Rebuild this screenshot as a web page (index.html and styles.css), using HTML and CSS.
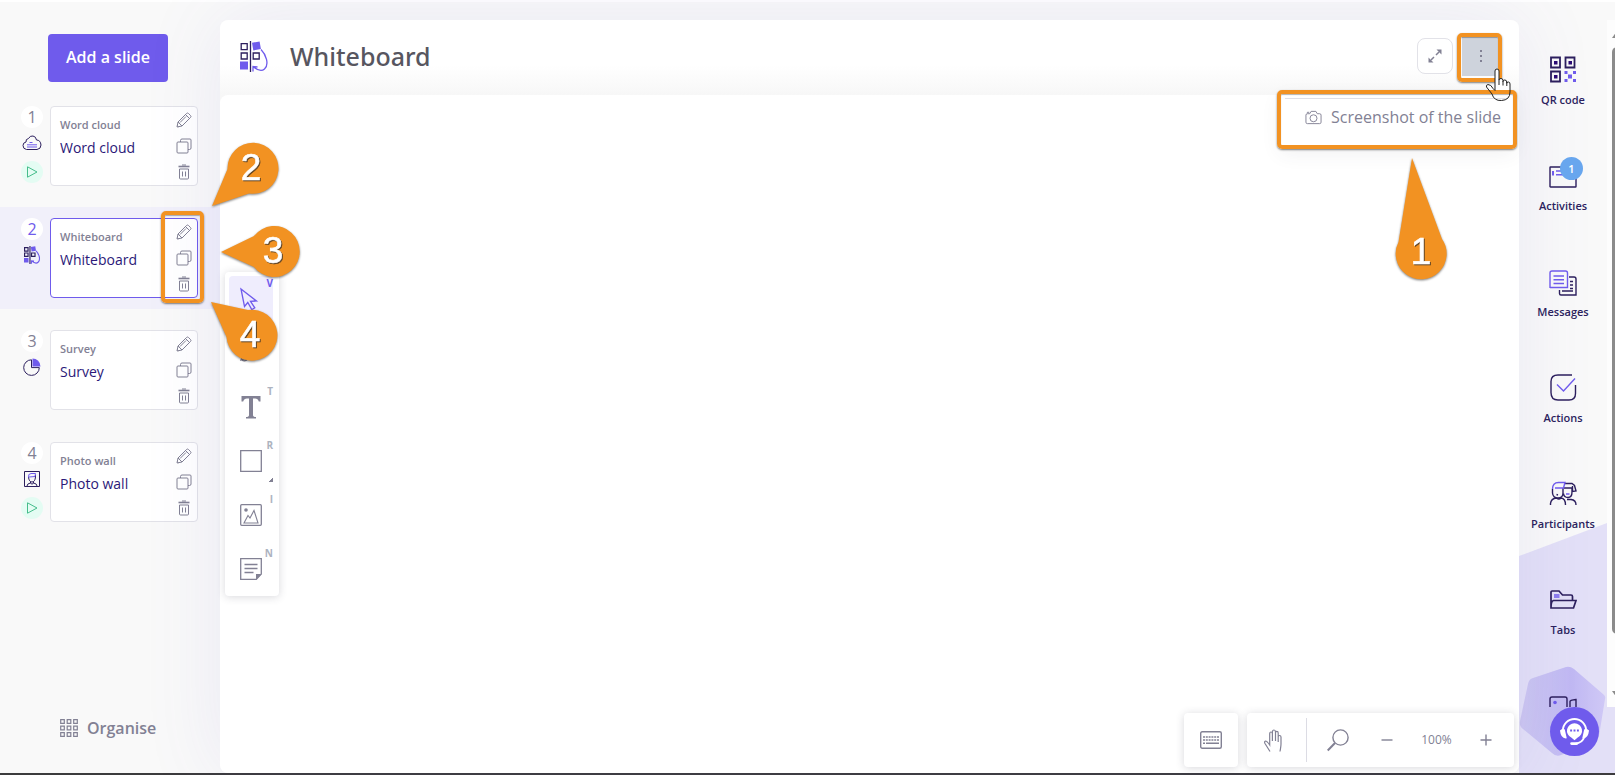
FILE: index.html
```html
<!DOCTYPE html>
<html lang="en">
<head>
<meta charset="utf-8">
<title>Whiteboard</title>
<link rel="stylesheet" href="styles.css">
</head>
<body>
<svg class="defs" aria-hidden="true">
  <symbol id="pencil" viewBox="0 0 16 16"><path d="M1 15l1-5 8.500-8.500q1-1 2 0l2 2q1 1 0 2L6 14z M2 10l4 4 M9.500 2.500l4 4 M4 10.500l6-6 M1.200 13.500l1.300 1.300" /></symbol>
  <symbol id="copy" viewBox="0 0 16 16"><rect x="1" y="4" width="11" height="11" rx="1"/><path d="M4.500 4V2.500q0-1.500 1.500-1.500H14q1 0 1 1v8q0 1.500-1.500 1.500H12"/></symbol>
  <symbol id="trash" viewBox="0 0 16 16"><path d="M2.500 2.500h11" stroke-width="1.600"/><path d="M6 1h4M3.500 5v9q0 1 1 1h7q1 0 1-1V5zM6.500 7.500v5M9.500 7.500v5"/></symbol>
  <symbol id="play" viewBox="0 0 12 12"><path d="M1.500.8v10.400L11 6z"/></symbol>
  <symbol id="board" viewBox="0 0 28 31"><path class="ink" d="M1.200 2.700h6v6h-6zM1.200 12h6v6h-6zM13.200 12h6v6h-6zM10.500 0v31"/><path class="fill" d="M0 20.500h8v8H0zM12 1.800l7.600-1.300 1.300 7.600-7.600 1.300z"/><path class="accent" d="M21 8.500c5 5 8.500 15 3.500 19.500q-4 3.500-11-2M13 30.500v-5l4.500.500"/></symbol>
</svg>

<div class="app">
  <aside class="sidebar">
    <button class="add" type="button">Add a slide</button>
    <ol class="slides">
      <li class="slide">
        <div class="meta"><span class="num">1</span>
          <svg class="kind" viewBox="0 0 20 18"><path class="ink" d="M4.500 15.500Q1 15 1 11.500 1 8.500 4 8q-.5-3 2.500-3.500Q8 1.500 11 2q3 .5 3.500 4 4 0 4.500 5 0 4-4 4.500z"/><path class="accent" d="M7.500 8.500h3M5 10.800h10M5 13h10"/></svg>
          <span class="live"><svg viewBox="0 0 12 12"><use href="#play"/></svg></span></div>
        <div class="card"><div class="names"><span class="type">Word cloud</span><a href="#s1">Word cloud</a></div>
          <div class="acts"><button type="button" aria-label="Edit"><svg><use href="#pencil"/></svg></button><button type="button" aria-label="Duplicate"><svg><use href="#copy"/></svg></button><button type="button" aria-label="Delete"><svg><use href="#trash"/></svg></button></div></div>
      </li>
      <li class="slide current">
        <div class="meta"><span class="num">2</span>
          <svg class="kind thick" viewBox="0 0 28 31"><use href="#board"/></svg></div>
        <div class="card"><div class="names"><span class="type">Whiteboard</span><a href="#s2">Whiteboard</a></div>
          <div class="acts"><button type="button" aria-label="Edit"><svg><use href="#pencil"/></svg></button><button type="button" aria-label="Duplicate"><svg><use href="#copy"/></svg></button><button type="button" aria-label="Delete"><svg><use href="#trash"/></svg></button></div></div>
      </li>
      <li class="slide">
        <div class="meta"><span class="num">3</span>
          <svg class="kind" viewBox="0 0 18 18"><path class="ink" d="M8.500 1.800a7.800 7.800 0 1 0 7.800 7.800H8.500z"/><path class="fill" d="M9.500.5a8 8 0 0 1 8 8h-8z"/></svg></div>
        <div class="card"><div class="names"><span class="type">Survey</span><a href="#s3">Survey</a></div>
          <div class="acts"><button type="button" aria-label="Edit"><svg><use href="#pencil"/></svg></button><button type="button" aria-label="Duplicate"><svg><use href="#copy"/></svg></button><button type="button" aria-label="Delete"><svg><use href="#trash"/></svg></button></div></div>
      </li>
      <li class="slide">
        <div class="meta"><span class="num">4</span>
          <svg class="kind" viewBox="0 0 18 18"><path class="ink" d="M1.500 1.500h15v15h-15zM4 16q0-2.500 3.500-3v-1.500M14 16q0-2.500-3.500-3v-1.500M5.500 7q.5 5 3.500 5t3.500-5V5M7.500 13.500q1.500 1 3 0"/><path class="accent" d="M5.500 7.500Q5 3.500 8 3.500h4.500l-.5 3-6 .5"/></svg>
          <span class="live"><svg viewBox="0 0 12 12"><use href="#play"/></svg></span></div>
        <div class="card"><div class="names"><span class="type">Photo wall</span><a href="#s4">Photo wall</a></div>
          <div class="acts"><button type="button" aria-label="Edit"><svg><use href="#pencil"/></svg></button><button type="button" aria-label="Duplicate"><svg><use href="#copy"/></svg></button><button type="button" aria-label="Delete"><svg><use href="#trash"/></svg></button></div></div>
      </li>
    </ol>
    <button class="organise" type="button"><svg viewBox="0 0 18 18"><path d="M.7.700h3.600v3.600H.7zM7.200.700h3.600v3.600H7.200zM13.700.700h3.600v3.600h-3.600zM.7 7.200h3.600v3.600H.7zM7.200 7.200h3.600v3.600H7.200zM13.700 7.200h3.600v3.600h-3.600zM.7 13.700h3.600v3.600H.7zM7.200 13.700h3.600v3.600H7.200zM13.700 13.700h3.600v3.600h-3.600z"/></svg>Organise</button>
  </aside>

  <main class="stage">
    <header class="bar">
      <svg class="boardicon" viewBox="0 0 28 31"><use href="#board"/></svg>
      <h1>Whiteboard</h1>
      <button class="sq" type="button" aria-label="Full screen"><svg viewBox="0 0 14 14"><path d="M3 11l3-3M8 6l3-3" stroke-width="1.500"/><path class="solid" d="M.5 13.500v-5l5 5zM13.500.5v5l-5-5z"/></svg></button>
      <button class="sq more" type="button" aria-label="More"><svg viewBox="0 0 4 14"><path class="solid" d="M1 1h2v2H1zM1 6h2v2H1zM1 11h2v2H1z"/></svg></button>
    </header>
    <div class="canvas">
      <div class="tools">
        <button class="on" type="button" aria-label="Select"><svg viewBox="0 0 22 22"><path d="M1 1l15.500 12-6 .3 4.300 6.500-3 1.700-4-7-3.300 4z"/></svg><kbd>V</kbd></button>
        <button type="button" aria-label="Pencil"><svg viewBox="0 0 22 22"><path d="M1 18l2-6L16 0l4 4L7 16zM1 17q3 4 8-1"/></svg></button>
        <button type="button" aria-label="Text"><svg viewBox="0 0 22 22"><path class="solid" d="M1.500 0h19v5.500h-1.700Q18 2.500 15 2.500h-2V19q0 2 3 2v1.500H6V21q3 0 3-2V2.500H7q-3 0-3.800 3H1.500z"/></svg><kbd>T</kbd></button>
        <button type="button" aria-label="Shape"><svg viewBox="0 0 22 22"><path d="M.7.700h20.600v20.600H.7z"/></svg><kbd>R</kbd><i class="corner"></i></button>
        <button type="button" aria-label="Image"><svg viewBox="0 0 22 22"><rect x=".7" y=".7" width="20.600" height="20.600" rx="1"/><path d="M4 19l4-7.500 2 2.500 4-7.500 4 12.500z" stroke-width="1.100"/><circle class="solid" cx="6" cy="6" r="1.800"/></svg><kbd>I</kbd></button>
        <button type="button" aria-label="Note"><svg viewBox="0 0 22 22"><path d="M.7.700h20.600v15.300l-5 5.300H.7zM4.500 6.500h13M4.500 10.500h13M4.500 14.500h9"/><path class="solid" d="M16 21.500V16h5.500z"/></svg><kbd>N</kbd></button>
      </div>
      <div class="controls">
        <div class="panel"><button type="button" aria-label="Keyboard"><svg width="22" height="18" viewBox="0 0 22 18"><rect x=".7" y=".7" width="20.600" height="16.600" rx="1.500"/><path d="M3 6h16M3 9h16" stroke-dasharray="2 .8" /><path d="M3 12.200h2M6 12.200h13"/></svg></button></div>
        <div class="panel">
          <button type="button" aria-label="Pan"><svg width="19" height="23" viewBox="0 0 19 23"><path d="M6 22.500L1 14.500q-1-2 .5-2.500 1.500 0 4.200 4V5q0-2 1.300-2 1.400 0 1.400 2v7V3q0-2 1.600-2 1.500 0 1.500 2v9V4q0-1.600 1.300-1.600Q14.200 2.400 14.200 4v9V8q0-1.500 1.200-1.500 1.600 0 1.600 1.500v7q0 2-1 7.500" stroke-width="1.200"/></svg></button>
          <span class="rule"></span>
          <button class="wide" type="button" aria-label="Zoom"><svg width="22" height="23" viewBox="0 0 22 23"><circle cx="13.500" cy="8.500" r="7.600"/><path d="M8 14L.7 21.500" stroke-width="2"/></svg></button>
          <button class="slim" type="button" aria-label="Zoom out"><svg width="12" height="12" viewBox="0 0 12 12"><path d="M.5 6h11"/></svg></button>
          <output>100%</output>
          <button class="slim" type="button" aria-label="Zoom in"><svg width="12" height="12" viewBox="0 0 12 12"><path d="M.5 6h11M6 .5v11"/></svg></button>
        </div>
      </div>
    </div>
    <div class="menu"><button type="button"><svg viewBox="0 0 18 15"><path d="M5 3.500L6.500 1h5L13 3.500h2.500q1.500 0 1.500 1.500v7.500q0 1.500-1.500 1.500h-13Q1 14 1 12.500V5q0-1.500 1.500-1.500zM2.500 3V2h2"/><circle cx="9" cy="8.300" r="3.700"/></svg>Screenshot of the slide</button></div>
  </main>

  <nav class="rail">
    <svg class="slope" viewBox="0 0 96 253" preserveAspectRatio="none"><path fill="#e3e0f7" d="M0 36L96 0v253H0z"/></svg>
    <svg class="gem" viewBox="0 0 88 92"><defs><linearGradient id="g"><stop offset="0" stop-color="#cdc8f1"/><stop offset=".6" stop-color="#c1b9f3"/><stop offset="1" stop-color="#cfc8f6"/></linearGradient></defs><path fill="url(#g)" d="M14 12L47 1q4-1 8 2l29 25q3 2 2 5l-6 37q-1 4-5 6l-33 13q-5 2-9-2L4 63q-4-3-3-8l8-37q1-5 5-6z"/></svg>
    <div class="scroller">
      <div class="items">
        <a href="#qr"><svg viewBox="0 0 28 28"><path class="ink" d="M2 1.500h9v10H2zM16.500 1.500h9v10h-9zM2 15.500h9v10H2z" stroke-width="1.800"/><path class="inkfill" d="M5 5h3.500v3.500H5zM19.500 5H23v3.500h-3.500zM5 19h3.500v3.500H5z"/><path class="fill" d="M15.500 15h3v3h-3zM24 15h3v3h-3zM19 18.500h4v4h-4zM15.500 23h3v3h-3zM24 23h3v3h-3z"/></svg>QR code</a>
        <a href="#activities"><svg viewBox="0 0 28 28"><rect class="ink" x="1" y="5" width="26" height="20" rx=".5"/><path class="accent" d="M4 9v4.500" stroke-width="2"/><path class="accent" d="M7 9h8M7 12.800h8"/></svg><b class="badge">1</b>Activities</a>
        <a href="#messages"><svg viewBox="0 0 28 28"><path class="ink" d="M20 9h5q2 0 2 2v16H12q-1.500 0-1.500-1.500V22M21 13.500h3M21 17h3M21 20.500h3M13 23h11"/><path class="accent" d="M1 20V5q0-2 2-2h13.500q2 0 2 2v14.500H1M4.500 8H15M4.500 11.700H15M4.500 15.500H15"/></svg>Messages</a>
        <a href="#actions"><svg viewBox="0 0 28 28"><path class="ink" d="M23 1H9Q2 1 2 7.500v11Q2 26 9 26h11q6.500 0 6.500-6.500V11"/><path class="accent" d="M8 10.500l6.500 6.500L26 4.500"/></svg>Actions</a>
        <a href="#participants"><svg viewBox="0 0 28 28"><path class="ink" d="M1.500 25v-1.500q.5-5 6-5.500 2.500 2 4.500 0 4.500.5 4.500 7M3.500 9v4q.5 5 5.500 5t5-5V8M16 3.500h7l2.500 2L27 11l-3.500.5V6M15 8h8v4q0 5.500-4 5.500t-4.500-4M18 19.500h4q5 .5 5 5.500M7.500 14.500l1.500.5"/><path class="accent" d="M3.500 9q0-6.500 6-6.500h6.500l-1.500 5.500H6M17 14h3.500"/></svg>Participants</a>
        <a href="#tabs"><svg viewBox="0 0 28 28"><path class="ink" d="M2 22V6q0-1 1-1h7l3.500 4H22q1.500 0 1.500 1.500V14M2 22q0-7 2.500-7.500H27l-2.500 7.500z" stroke-width="1.700"/><path class="accent" d="M5 9h5.500M5 11h5.500"/></svg>Tabs</a>
        <a href="#video" aria-label="Video"><svg viewBox="0 0 28 28"><rect class="ink" x="1" y="5" width="17" height="18" rx="2"/><path class="ink" d="M21 9.500q0-1.500 6-2v14l-6-3z"/><circle class="fill" cx="6" cy="10.500" r="1.800"/></svg></a>
      </div>
      <div class="track"><i class="up"></i><i class="thumb"></i><i class="down"></i></div>
    </div>
    <button class="help" type="button" aria-label="Support"><svg viewBox="0 0 32 32"><path d="M4 18v-3a12 12 0 0 1 24 0v3M26 22q-2 6-9 6.500" stroke="#fff" stroke-width="2" fill="none"/><path d="M1 15q3-3 5-1l2 9q-6 1-7-8zM31 15q-3-3-5-1l-2 9q6 1 7-8zM13 27h5q2 0 2 1.500T18 30h-5q-1.500 0-1.500-1.500T13 27z" fill="#fff"/><path d="M16 7.500a7.800 7.800 0 0 1 3 15L16 25l-3-2.500a7.800 7.800 0 0 1 3-15z" fill="#fff"/><path d="M11.500 14h2v2h-2zM15 14h2v2h-2zM18.500 14h2v2h-2z" fill="#6f5bec"/></svg></button>
  </nav>
</div>

<div class="frame frame-acts"></div>
<div class="frame frame-more"></div>
<div class="frame frame-menu"></div>
<svg class="pointer" width="26" height="34" viewBox="0 0 26 34"><path fill="#fff" d="M10 14V3q0-2 2-2t2 2v9q0-1.500 2-1.500t2 2v1q0-1.500 1.800-1.500t2 2v1.200q0-1.200 1.600-1.200T25 16v6H4L1.500 19q-.8-2 1.500-2.500 3 0 5 4l2 2z" stroke="none"/><path d="M10 22.500V3q0-2 2-2t2 2v9q0-1.500 2-1.500t2 2v1q0-1.500 1.800-1.500t2 2v1.200q0-1.200 1.600-1.200T25 16v8q0 8-8.500 8.500Q9 33 7 26L1.500 19q-.8-2 1.500-2.500 3 0 5 4l2 2M14 12v5M18 13v4.500M21.800 14v4"/></svg>
<svg class="mark m1" width="54" height="124" viewBox="0 0 54 124"><path d="M18 2L4.500 86A25.500 25.500 0 1 0 48 83Z"/><text x="27" y="108">1</text></svg>
<svg class="mark m2" width="70" height="68" viewBox="0 0 70 68"><path d="M3 66L18.500 29A25.500 25.500 0 1 1 40 53.500Z"/><text x="42" y="40">2</text></svg>
<svg class="mark m3" width="82" height="56" viewBox="0 0 82 56"><path d="M2 28L35 12A25.500 25.500 0 1 1 35 43Z"/><text x="54" y="39">3</text></svg>
<svg class="mark m4" width="70" height="64" viewBox="0 0 70 64"><path d="M2 2L17.500 37A25.500 25.500 0 1 0 39 10Z"/><text x="41" y="47">4</text></svg>
</body>
</html>
```

FILE: styles.css
```css
* { box-sizing: border-box; }
html, body { height: 100%; margin: 0; }
body { position: relative; overflow: hidden; background: #fff; font-family: "Open Sans", "Noto Sans", sans-serif; color: #828194; }
button { border: 0; padding: 0; background: none; font: inherit; color: inherit; }
a { color: inherit; text-decoration: none; }
svg { fill: none; stroke: none; display: block; }
.defs { position: absolute; width: 0; height: 0; }
.ink { stroke: #2c1f5e; fill: none; }
.accent { stroke: #6f5bec; fill: none; }
.fill { fill: #6f5bec; stroke: none; }
.inkfill { fill: #2b0a75; }
.solid { fill: #828194; stroke: none; }

.app { display: flex; height: 100vh; border-top: 2px solid #fff; border-bottom: 2px solid #3c3b3d; background: #f9f9f9; }

/* slide list */
.sidebar { width: 220px; flex: none; display: flex; flex-direction: column; padding: 32px 0 33px; }
.add { align-self: flex-start; margin-left: 48px; padding: 0 18px 2px; height: 48px; border-radius: 4px; background: #6f5bec; color: #fff; font-size: 16px; font-weight: 600; line-height: 24px; }
.slides { list-style: none; margin: 13px 0 auto; padding: 0; display: flex; flex-direction: column; gap: 10px; }
.slide { display: flex; gap: 7px; height: 102px; padding: 11px 22px 11px 21px; }
.current { background: #f1f0fa; }
.meta { width: 22px; display: flex; flex-direction: column; align-items: center; gap: 6px; }
.num, .live { width: 22px; height: 22px; border-radius: 50%; background: #fff; display: grid; place-items: center; flex: none; }
.num { font-size: 16px; line-height: 22px; }
.current .num { color: #6f5bec; }
.live { background: #e4fcf3; }
.live svg { width: 12px; height: 12px; stroke: #45bd8b; }
.kind { width: 20px; height: 18px; flex: none; stroke-width: 1; margin-bottom: 3px; }
.thick { stroke-width: 2; }
.card { flex: 1; display: flex; justify-content: space-between; background: #fff; border: 1px solid #e2e2e8; border-radius: 4px; padding: 4px 5px 4px 9px; }
.current .card { border-color: #6f5bec; }
.names { display: flex; flex-direction: column; padding-top: 6px; white-space: nowrap; }
.type { font-size: 11px; line-height: 16px; font-weight: 600; }
.names a { font-size: 14px; line-height: 20px; margin-top: 5px; color: #2b1878; }
.acts { display: flex; flex-direction: column; justify-content: space-between; }
.acts svg { width: 16px; height: 16px; stroke: #828194; }
.acts button { height: 18px; }
.organise { align-self: flex-start; margin-left: 60px; display: flex; align-items: center; gap: 9px; font-size: 16px; font-weight: 600; line-height: 24px; }
.organise svg { width: 18px; height: 18px; stroke: #828194; stroke-width: 1.200; }

/* stage */
.stage { position: relative; z-index: 2; flex: 1; margin-top: 18px; display: flex; flex-direction: column; border-radius: 8px; background: #f7f7f7; box-shadow: 0 0 80px rgba(96, 84, 200, .1); }
.bar { height: 75px; flex: none; display: flex; align-items: center; padding: 0 19px 3px 20px; border-radius: 8px 8px 0 0; background: linear-gradient(#fff 60%, #f7f7f7); }
.boardicon { width: 28px; height: 31px; stroke-width: 1.300; }
.bar h1 { margin: 0 auto 0 22px; font-family: "Noto Sans", sans-serif; font-size: 25px; font-weight: 500; line-height: 34px; color: #575660; }
.sq { width: 36px; height: 36px; border: 1px solid #e2e2e8; border-radius: 8px; background: #fff; display: grid; place-items: center; margin-right: 9px; }
.sq svg { height: 14px; stroke: #828194; }
.more { width: 38px; height: 40px; margin-right: 0; border: 0; border-radius: 0; background: #ced3dc; }
.canvas { position: relative; flex: 1; border-radius: 8px; background: #fff; }
.tools { position: absolute; left: 5px; top: 177px; padding: 0; width: 54px; display: flex; flex-direction: column; background: #fff; border-radius: 4px; box-shadow: 0 1px 8px rgba(60, 60, 80, .2); }
.tools button { position: relative; height: 46px; margin: 4px 6px 4px 4px; display: grid; place-items: center; border-radius: 4px; }
.tools svg { width: 22px; height: 22px; stroke: #828194; stroke-width: 1.300; overflow: visible; }
.tools .on { background: #efedfd; }
.tools .on svg { stroke: #6f5bec; }
.tools kbd { position: absolute; top: 1px; right: 0; font: bold 10px/12px "Open Sans", sans-serif; color: #adb3bf; }
.tools .on kbd { color: #6f5bec; }
.corner { position: absolute; right: 0; bottom: 2px; width: 5px; height: 5px; background: linear-gradient(135deg, transparent 50%, #828194 50%); }
.controls { position: absolute; right: 5px; bottom: 6px; display: flex; gap: 9px; }
.panel { display: flex; align-items: center; height: 54px; padding-right: 1px; background: #fff; border-radius: 4px; box-shadow: 0 1px 8px rgba(60, 60, 80, .2); }
.panel button { width: 53px; display: grid; place-items: center; }
.panel svg { stroke: #828194; stroke-width: 1.400; }
.panel .wide { width: 62px; }
.panel .slim { width: 36px; }
.panel output { width: 63px; text-align: center; font-size: 12px; line-height: 18px; }
.rule { width: 1px; height: 44px; margin: 0 0 0 6px; background: #dcdce4; }
.panel:last-child { padding-right: 10px; }
.menu { position: absolute; right: 5px; top: 73px; width: 234px; height: 54px; background: #fff; border-radius: 4px; padding: 5px 6px 5px 5px; box-shadow: 0 6px 20px rgba(60, 60, 80, .08); }
.menu::before { content: ""; position: absolute; right: 22px; top: -8px; width: 20px; height: 20px; background: #fff; transform: rotate(45deg); z-index: -1; }
.menu button { width: 100%; border-top: 1px solid #dfdfe6; display: flex; align-items: center; gap: 9px; padding: 6px 8px 6px 20px; font-size: 16px; line-height: 24px; white-space: nowrap; }
.menu svg { width: 17px; height: 15px; flex: none; stroke: #828194; }

/* right rail */
.rail { position: relative; width: 96px; flex: none; display: flex; flex-direction: column; }
.slope, .gem { position: absolute; }
.slope { left: 0; bottom: 0; width: 96px; height: 253px; }
.gem { left: 0; bottom: 15px; width: 88px; height: 92px; }
.scroller { position: relative; flex: 1; min-height: 0; margin: 18px 0 66px; display: flex; overflow: hidden; z-index: 3; }
.items { flex: 1; padding-top: 27px; display: flex; flex-direction: column; gap: 46px; }
.items a { position: relative; flex: none; height: 60px; display: flex; flex-direction: column; align-items: center; font-size: 11px; font-weight: 600; line-height: 14px; color: #2c1f5e; }
.items a:last-child { height: 46px; }
.items svg { width: 28px; height: 28px; margin: 9px 0; flex: none; stroke-width: 1.400; }
.badge { position: absolute; left: 41px; top: 4px; width: 23px; height: 23px; border-radius: 50%; background: #68a6ee; color: #fff; font-size: 11px; font-weight: 600; line-height: 23px; text-align: center; }
.track { width: 8px; padding-left: 5px; background: #fdfdfd; display: flex; flex-direction: column; }
.track i { width: 10px; background: #8b8b8b; }
.up { height: 7px; margin: 11px 0 9px; clip-path: polygon(50% 0, 100% 100%, 0 100%); }
.thumb { flex: 1; border-radius: 5px; }
.down { height: 7px; margin: 57px 0 9px; clip-path: polygon(0 0, 100% 0, 50% 100%); }
.help { position: absolute; right: 16px; bottom: 17px; width: 49px; height: 49px; border-radius: 50%; background: #6f5bec; display: grid; place-items: center; z-index: 4; }
.help svg { width: 31px; height: 31px; }

/* tutorial annotations */
.frame, .mark, .pointer { position: absolute; z-index: 5; }
.frame { border: 4px solid #f29222; border-radius: 5px; box-shadow: 0 1px 2px rgba(0, 0, 0, .5), inset 0 1px 1px rgba(0, 0, 0, .3); }
.frame-acts { left: 161px; top: 211px; width: 43px; height: 92px; }
.frame-more { right: 113px; top: 33px; width: 45px; height: 49px; }
.frame-menu { right: 98px; top: 90px; width: 240px; height: 59px; }
.mark { fill: #f29222; filter: drop-shadow(0 1px 1px rgba(0, 0, 0, .5)); }
.mark text { fill: #fff; stroke: #fff; stroke-width: .6px; font: 37px "Liberation Sans", Arial, sans-serif; text-anchor: middle; filter: drop-shadow(1px 1px 0 rgba(60, 50, 40, .8)); }
.m1 { right: 167px; top: 156px; }
.m2 { left: 209px; top: 140px; }
.m3 { left: 219px; top: 224px; }
.m4 { left: 209px; top: 300px; }
.pointer { right: 104px; top: 68px; fill: none; stroke: #222; stroke-width: 1; }
```
